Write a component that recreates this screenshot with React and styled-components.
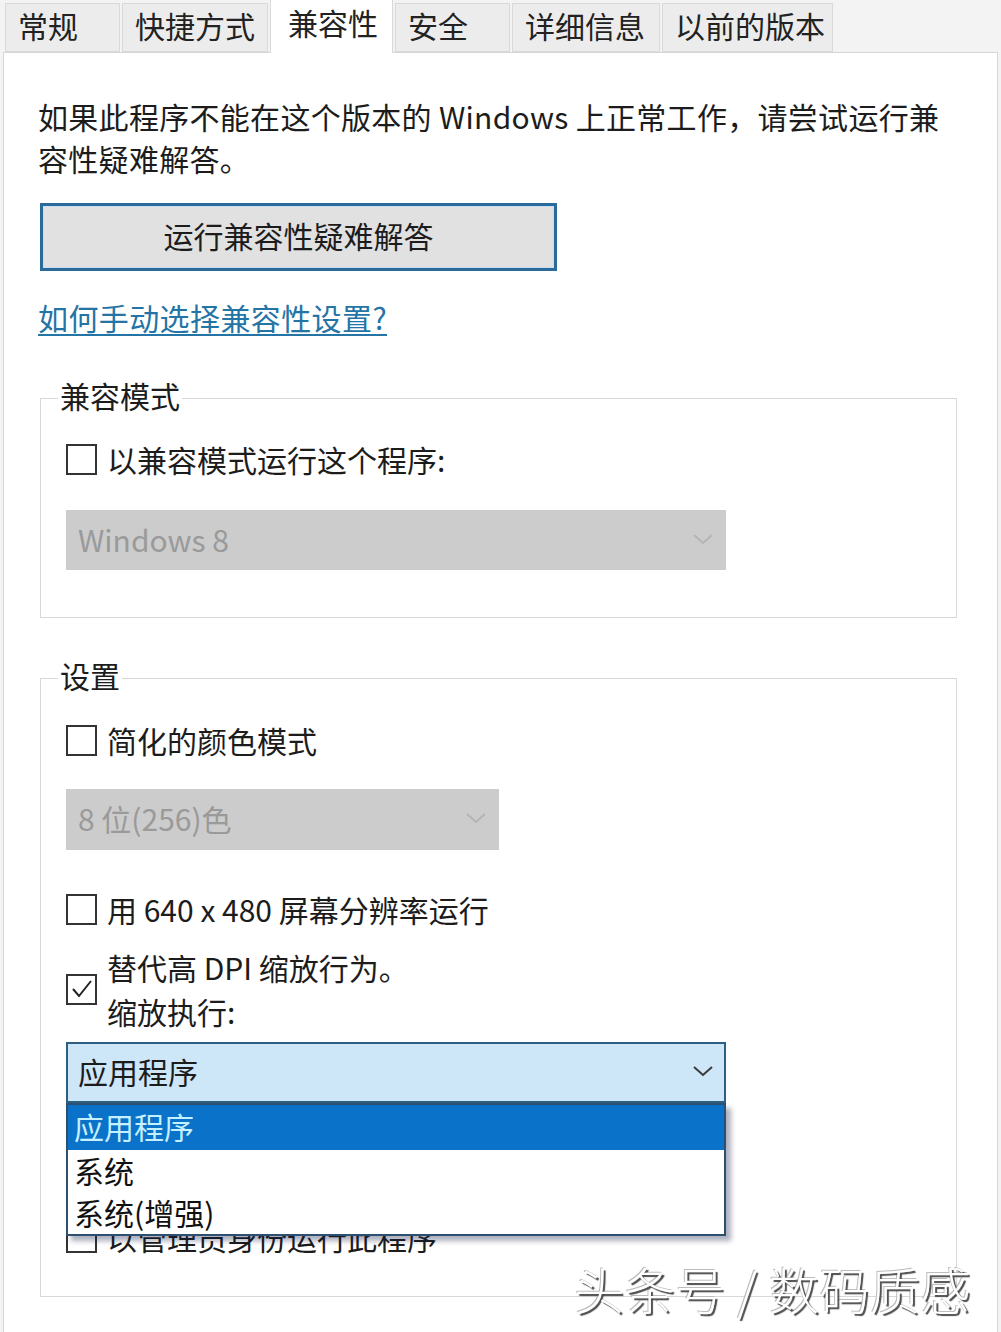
import React from "react"
import styled, { createGlobalStyle } from "styled-components"

const GlobalStyle = createGlobalStyle`
  html, body {
    margin: 0;
    padding: 0;
    background: #ffffff;
  }
  body {
    font-family: "Noto Sans CJK SC", "Noto Sans", sans-serif;
    color: #1c1c1c;
  }
`

const Window = styled.div`
  position: relative;
  width: 1001px;
  height: 1332px;
  padding: 0 3px;
  box-sizing: border-box;
  background: #f3f3f3;
  overflow: hidden;
`

const TabBar = styled.div`
  display: flex;
  align-items: flex-end;
  gap: 2px;
  height: 52px;
  padding-left: 2px;
  border-bottom: 1px solid #d6d6d6;
`

const Tab = styled.div`
  box-sizing: border-box;
  width: ${(p) => p.$width}px;
  height: ${(p) => (p.$active ? 54 : 49)}px;
  margin-bottom: ${(p) => (p.$active ? -1 : 0)}px;
  padding-left: ${(p) => (p.$active ? 17 : 12)}px;
  padding-top: ${(p) => (p.$active ? 3 : 2)}px;
  background: ${(p) => (p.$active ? "#ffffff" : "#ececec")};
  border: 1px solid #d9d9d9;
  border-bottom: ${(p) => (p.$active ? "none" : "1px solid #d9d9d9")};
  font-size: 30px;
  line-height: 38px;
  color: #222;
  white-space: nowrap;
`

const Panel = styled.div`
  height: 1280px;
  padding: 42px 40px 0 34px;
  background: #ffffff;
  border-left: 1px solid #d6d6d6;
  border-right: 1px solid #d6d6d6;
`

const Intro = styled.p`
  margin: 0;
  font-size: 30px;
  line-height: 42px;
  letter-spacing: 0.3px;
  white-space: nowrap;
  color: #1c1c1c;
`

const TroubleButton = styled.div`
  box-sizing: border-box;
  width: 517px;
  height: 68px;
  margin: 24px 0 0 2px;
  padding-bottom: 5px;
  display: flex;
  align-items: center;
  justify-content: center;
  background: #e1e1e1;
  border: 3px solid #2b6b9b;
  box-shadow: inset 0 0 0 1px #c9def0;
  font-size: 30px;
  color: #1c1c1c;
`

const HelpLink = styled.a`
  display: inline-block;
  margin-top: 26px;
  font-size: 30px;
  line-height: 40px;
  letter-spacing: 0.4px;
  color: #2474a6;
  text-decoration: underline;
  text-underline-offset: 4px;
  text-decoration-thickness: 2px;
`

const Group = styled.fieldset`
  margin: ${(p) => p.$top}px 0 0 2px;
  padding: ${(p) => p.$padTop}px 0 ${(p) => p.$padBottom}px 25px;
  border: 1px solid #d8d8d8;
  min-width: 0;
`

const Legend = styled.legend`
  margin-left: -8px;
  padding: 0 2px 6px;
  font-size: 30px;
  line-height: 34px;
  color: #1c1c1c;
`

const CheckRow = styled.div`
  display: flex;
  align-items: center;
  gap: 10px;
  margin-top: ${(p) => p.$top || 0}px;
  font-size: 30px;
  line-height: ${(p) => p.$lineHeight || 40}px;
  color: #1c1c1c;
  white-space: nowrap;
`

const Box = styled.span`
  box-sizing: border-box;
  flex: none;
  width: 31px;
  height: 31px;
  border: 2px solid #333;
  background: #fff;
  display: flex;
  align-items: center;
  justify-content: center;
`

const SelectWrap = styled.div`
  position: relative;
  width: ${(p) => p.$width}px;
  margin-top: ${(p) => p.$top}px;
  z-index: 2;
`

const Select = styled.div`
  box-sizing: border-box;
  height: ${(p) => p.$height}px;
  display: flex;
  align-items: center;
  justify-content: space-between;
  padding: 0 10px 3px;
  font-size: 30px;
  background: ${(p) => (p.$open ? "#cde6f8" : "#cccccc")};
  border: 2px solid ${(p) => (p.$open ? "#2e5f82" : "#cccccc")};
  color: ${(p) => (p.$open ? "#1c1c1c" : "#9a9a9a")};
`

const Menu = styled.div`
  position: absolute;
  top: 100%;
  left: 0;
  right: 0;
  box-sizing: border-box;
  background: #ffffff;
  border: 2px solid #2e5070;
  box-shadow: 5px 5px 5px rgba(20, 30, 70, 0.35);
`

const MenuItem = styled.div`
  height: ${(p) => p.$height}px;
  display: flex;
  align-items: center;
  padding: 0 0 3px 6px;
  box-sizing: border-box;
  font-size: 30px;
  background: ${(p) => (p.$selected ? "#0a72c8" : "transparent")};
  color: ${(p) => (p.$selected ? "#c4f0ff" : "#111")};
`

const Watermark = styled.div`
  position: absolute;
  right: 30px;
  bottom: 14px;
  font-size: 50px;
  line-height: 60px;
  letter-spacing: 0.5px;
  font-weight: 300;
  color: #ffffff;
  text-shadow: 2px 2px 1px #4a4a4a, -1px -1px 0 #bdbdbd;
  white-space: nowrap;
  z-index: 5;
`

function Chevron({ color }) {
  return (
    <svg width="22" height="14" viewBox="0 0 22 14">
      <polyline points="2,3 11,11 20,3" fill="none" stroke={color} strokeWidth="2" />
    </svg>
  )
}

function Check() {
  return (
    <svg width="24" height="24" viewBox="0 0 24 24">
      <polyline points="3,12 9,19 21,4" fill="none" stroke="#222" strokeWidth="2" />
    </svg>
  )
}

const tabs = [
  { label: "常规", width: 115 },
  { label: "快捷方式", width: 146 },
  { label: "兼容性", width: 123, active: true },
  { label: "安全", width: 115 },
  { label: "详细信息", width: 148 },
  { label: "以前的版本", width: 171 },
]

export default function App() {
  return (
    <>
      <GlobalStyle />
      <Window>
        <TabBar>
          {tabs.map((t) => (
            <Tab key={t.label} $width={t.width} $active={t.active}>
              {t.label}
            </Tab>
          ))}
        </TabBar>

        <Panel>
          <Intro>
            如果此程序不能在这个版本的 Windows 上正常工作，请尝试运行兼
            <br />
            容性疑难解答。
          </Intro>

          <TroubleButton>运行兼容性疑难解答</TroubleButton>

          <HelpLink>如何手动选择兼容性设置?</HelpLink>

          <Group $top={41} $padTop={21} $padBottom={47}>
            <Legend>兼容模式</Legend>
            <CheckRow>
              <Box />
              以兼容模式运行这个程序:
            </CheckRow>
            <SelectWrap $width={660} $top={31}>
              <Select $height={60}>
                Windows 8
                <Chevron color="#b5b5b5" />
              </Select>
            </SelectWrap>
          </Group>

          <Group $top={40} $padTop={22} $padBottom={39}>
            <Legend>设置</Legend>
            <CheckRow>
              <Box />
              简化的颜色模式
            </CheckRow>
            <SelectWrap $width={433} $top={29}>
              <Select $height={61}>
                8 位(256)色
                <Chevron color="#b5b5b5" />
              </Select>
            </SelectWrap>
            <CheckRow $top={39}>
              <Box />
              用 640 x 480 屏幕分辨率运行
            </CheckRow>
            <CheckRow $top={16} $lineHeight={44}>
              <Box>
                <Check />
              </Box>
              <span>
                替代高 DPI 缩放行为。
                <br />
                缩放执行:
              </span>
            </CheckRow>
            <SelectWrap $width={660} $top={9}>
              <Select $open $height={61}>
                应用程序
                <Chevron color="#3a3a3a" />
              </Select>
              <Menu>
                <MenuItem $selected $height={45}>应用程序</MenuItem>
                <MenuItem $height={43}>系统</MenuItem>
                <MenuItem $height={41}>系统(增强)</MenuItem>
              </Menu>
            </SelectWrap>
            <CheckRow $top={114}>
              <Box />
              以管理员身份运行此程序
            </CheckRow>
          </Group>
        </Panel>

        <Watermark>头条号 / 数码质感</Watermark>
      </Window>
    </>
  )
}
